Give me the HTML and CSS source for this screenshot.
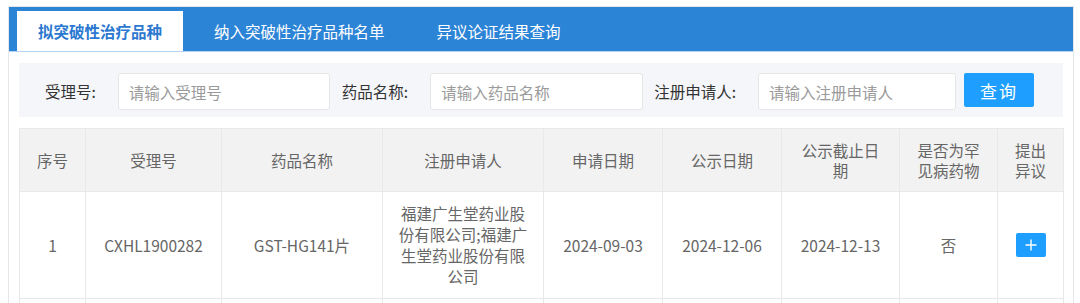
FILE: index.html
```html
<!DOCTYPE html>
<html lang="zh-CN">
<head>
    <meta charset="UTF-8">
    <title>突破性治疗品种</title>
    <link rel="stylesheet" href="styles.css">
</head>
<body>
<div class="box">
    <div class="tabs">
        <div class="tab active">拟突破性治疗品种</div>
        <div class="tab">纳入突破性治疗品种名单</div>
        <div class="tab">异议论证结果查询</div>
    </div>

    <div class="content">
        <div class="search">
            <label class="lbl">受理号:</label>
            <input class="ipt w1" type="text" placeholder="请输入受理号">
            <label class="lbl">药品名称:</label>
            <input class="ipt w2" type="text" placeholder="请输入药品名称">
            <label class="lbl">注册申请人:</label>
            <input class="ipt w3 last" type="text" placeholder="请输入注册申请人">
            <button class="btn">查询</button>
        </div>

        <table class="grid">
            <colgroup>
                <col style="width:66px">
                <col style="width:136px">
                <col style="width:161px">
                <col style="width:161px">
                <col style="width:119px">
                <col style="width:119px">
                <col style="width:118px">
                <col style="width:98px">
                <col style="width:66px">
            </colgroup>
            <thead>
            <tr>
                <th>序号</th>
                <th>受理号</th>
                <th>药品名称</th>
                <th>注册申请人</th>
                <th>申请日期</th>
                <th>公示日期</th>
                <th>公示截止日期</th>
                <th>是否为罕见病药物</th>
                <th>提出异议</th>
            </tr>
            </thead>
            <tbody>
            <tr>
                <td>1</td>
                <td>CXHL1900282</td>
                <td>GST-HG141片</td>
                <td>福建广生堂药业股份有限公司;福建广生堂药业股份有限公司</td>
                <td>2024-09-03</td>
                <td>2024-12-06</td>
                <td>2024-12-13</td>
                <td>否</td>
                <td>
                    <span class="add">
                        <svg width="12" height="12" viewBox="0 0 12 12">
                            <path d="M6 0.5V11.5M0.5 6H11.5" stroke="#fff" stroke-width="1.4" fill="none"/>
                        </svg>
                    </span>
                </td>
            </tr>
            <tr class="empty">
                <td></td>
                <td></td>
                <td></td>
                <td></td>
                <td></td>
                <td></td>
                <td></td>
                <td></td>
                <td></td>
            </tr>
            </tbody>
        </table>
    </div>
</div>
</body>
</html>
```

FILE: styles.css
```css
body {
    margin: 0;
    background-color: #fff;
    font-family: "Noto Sans CJK SC", "Microsoft YaHei", sans-serif;
    font-size: 15.5px;
    color: #666;
}

.box {
    box-sizing: border-box;
    width: 1066px;
    margin: 6px 0 0 8px;
    border: 1px solid #e4e6ea;
    border-bottom: none;
    background-color: #fff;
    height: 400px;
}

.tabs {
    display: flex;
    align-items: flex-end;
    height: 44px;
    padding-left: 8px;
    background-color: #2c84d7;
    border-bottom: 1px solid #b5d4f1;
}

.tab {
    height: 40px;
    line-height: 40px;
    padding: 0 21px;
    margin-right: 10px;
    color: #fff;
    white-space: nowrap;
}

.tab.active {
    background-color: #fff;
    color: #2b78d0;
    font-weight: bold;
}

.content {
    padding: 11px 10px 0 10px;
}

.search {
    display: flex;
    align-items: flex-start;
    height: 54px;
    box-sizing: border-box;
    padding: 10px 0 0 26px;
    background-color: #f5f6f9;
    margin-bottom: 11px;
}

.lbl {
    line-height: 37px;
    color: #333;
    margin-right: 22px;
    white-space: nowrap;
}

.ipt {
    box-sizing: border-box;
    height: 37px;
    padding: 0 10px;
    border: 1px solid #e6e6e6;
    border-radius: 3px;
    background-color: #fff;
    font-family: inherit;
    font-size: 15.5px;
    color: #333;
    margin-right: 12px;
    outline: none;
}

.ipt::placeholder {
    color: #9a9a9a;
}

.w1 { width: 212px; }
.w2 { width: 213px; margin-right: 11px; }
.w3 { width: 198px; }
.ipt.last { margin-right: 8px; }

.btn {
    width: 70px;
    height: 34px;
    border: none;
    border-radius: 2px;
    background-color: #1e9fff;
    color: #fff;
    font-family: inherit;
    font-size: 17px;
    letter-spacing: 2px;
    cursor: pointer;
}

.grid {
    width: 1044px;
    table-layout: fixed;
    border-collapse: collapse;
}

.grid th,
.grid td {
    border: 1px solid #e8e8e8;
    text-align: center;
    color: #666;
    font-weight: normal;
    padding: 11px 14px;
    line-height: 21px;
    word-break: break-all;
}

.grid th {
    background-color: #f2f2f2;
    line-height: 20px;
    height: 40px;
}

.grid .empty td {
    height: 40px;
}

.add {
    display: inline-flex;
    align-items: center;
    justify-content: center;
    width: 30px;
    height: 24px;
    border-radius: 2px;
    background-color: #1e9fff;
    vertical-align: middle;
}
```
